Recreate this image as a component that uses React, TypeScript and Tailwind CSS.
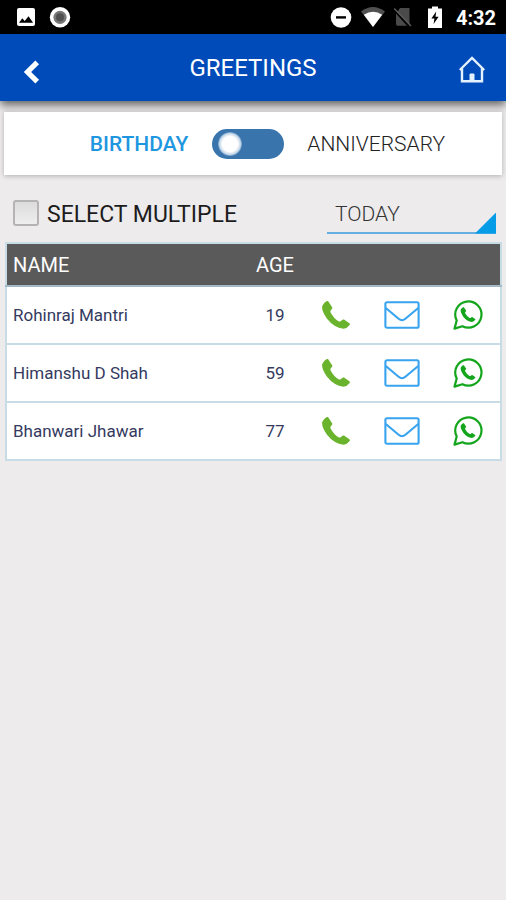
import { useState } from "react";

type Person = { name: string; age: number };

const people: Person[] = [
  { name: "Rohinraj Mantri", age: 19 },
  { name: "Himanshu D Shah", age: 59 },
  { name: "Bhanwari Jhawar", age: 77 },
];

const HANDSET =
  "M6.2.3 10.3 6.4Q10.6 7.6 9.4 8.6 7.9 10 8.6 11.6 12 18 17 20.5 18.5 20.9 19.8 19.2 20.8 18 22 18.6L27.4 22.2Q28.4 23 27.4 24.3 25 27.6 21.5 27.7 12 26.7 5 17.8-.6 10 .2 5 1 2.2 4.4.2 5.6-.3 6.2.3Z";

function StatusBar() {
  return (
    <div className="flex h-[34px] items-center bg-black pr-[10px] pl-4 text-white">
      <svg className="size-5" viewBox="0 0 20 20" aria-hidden="true">
        <rect x="1" y="1" width="18" height="18" rx="2" fill="white" />
        <path d="M3 15.8 6.3 11.3l2.4 2.8 3.8-4.8 4.6 6.5z" fill="black" />
      </svg>
      <svg className="ml-3 size-6" viewBox="0 0 24 24" aria-hidden="true">
        <circle cx="12" cy="12.3" r="10.2" fill="white" />
        <circle cx="12" cy="12.3" r="6.6" fill="#777" />
        <circle cx="12" cy="12.3" r="4" fill="#505050" />
      </svg>
      <svg className="ml-auto size-6" viewBox="0 0 24 24" aria-hidden="true">
        <circle cx="12" cy="12.5" r="10.3" fill="white" />
        <rect x="7" y="11.2" width="10" height="2.4" fill="black" />
      </svg>
      <svg className="ml-2 size-6" viewBox="0 0 24 24" aria-hidden="true">
        <path d="M0 6.5Q12-2.5 24 6.5L12 22z" fill="#505050" />
        <path d="M2.8 9.8Q12 3.8 21.2 9.8L12 22z" fill="white" />
      </svg>
      <svg className="ml-2 size-5" viewBox="0 0 20 20" aria-hidden="true">
        <path d="M7 1h9.5v16.5L4.2 5z" fill="#4a4a4a" />
        <path d="M3 6.5 14 18.8H4.5Q3 18.8 3 17z" fill="#4a4a4a" />
        <path d="M1.2 1.5 18 19" stroke="#5c5c5c" strokeWidth="1.4" />
      </svg>
      <svg className="ml-[14px] h-[22px] w-4" viewBox="0 0 16 22" aria-hidden="true">
        <path d="M5 0.5h6v2h4v19.5H1V2.5h4z" fill="white" />
        <path d="M9.2 5.5 4.4 12.5h3L6.6 18l5-7.2H8.5z" fill="black" />
      </svg>
      <time className="ml-[13px] pt-px text-[20px] leading-6 font-bold">4:32</time>
    </div>
  );
}

function PhoneIcon() {
  return (
    <svg className="h-7 w-7" viewBox="0 0 28 28" aria-hidden="true">
      <path d={HANDSET} fill="#6ab42d" />
    </svg>
  );
}

function MailIcon() {
  return (
    <svg className="h-7 w-9" viewBox="0 0 36 28" fill="none" stroke="#38a3ee" strokeWidth="2.1" aria-hidden="true">
      <rect x="1.4" y="1.2" width="33.2" height="25.6" rx="1.6" />
      <path d="M1.8 7 14.6 17.8Q18 20.7 21.4 17.8L34.2 7" />
    </svg>
  );
}

function WhatsAppIcon() {
  return (
    <svg className="size-[30px]" viewBox="0 0 30 30" aria-hidden="true">
      <path
        d="M1.5 28.6 3.7 20.5A13.1 13.1 0 1 1 9.4 26.2Z"
        fill="none"
        stroke="#13a51b"
        strokeWidth="2.2"
        strokeLinejoin="round"
      />
      <path d={HANDSET} fill="#13a51b" transform="translate(7.6 7.2) scale(.53)" />
    </svg>
  );
}

export default function App() {
  const [anniversary, setAnniversary] = useState(false);

  return (
    <div className="min-h-screen bg-[#edebec] font-['Roboto',sans-serif]">
      <StatusBar />
      <header className="grid h-[67px] grid-cols-[64px_1fr_64px] items-center bg-[#004bba] text-white shadow-[0_4px_9px_rgba(0,0,0,0.6)]">
        <button type="button" aria-label="Back" className="flex pt-2 pl-5">
          <svg className="size-6" viewBox="0 0 24 24" aria-hidden="true">
            <path d="M17.2 2.4 7.5 12l9.7 9.6" fill="none" stroke="white" strokeWidth="5.2" />
          </svg>
        </button>
        <h1 className="text-center text-[24px] leading-7 font-normal">GREETINGS</h1>
        <button type="button" aria-label="Home" className="flex justify-end pt-1 pr-5">
          <svg className="size-7" viewBox="0 0 28 28" fill="none" stroke="#e4f1ff" strokeWidth="2.4" aria-hidden="true">
            <path d="M1.8 14 14 2l12.2 12" />
            <path d="M4 12.3v12.9h20V12.3" />
            <path d="M12 25v-7h4v7z" fill="#e4f1ff" strokeWidth="1" />
          </svg>
        </button>
      </header>

      <main>
        <div className="relative mx-1 mt-[11px] flex h-[63px] items-center gap-6 bg-white text-[21px] leading-6 shadow-[0_1px_5px_rgba(0,0,0,0.25)]">
          <span className="w-[37%] text-right font-medium text-[#1e96e0]">BIRTHDAY</span>
          <label className="flex items-center gap-[23px] font-light text-[#222]">
            <span className="flex h-[30px] w-[72px] rounded-full bg-[#3a74ad] p-[2px] has-checked:justify-end">
              <input
                type="checkbox"
                role="switch"
                checked={anniversary}
                onChange={(e) => setAnniversary(e.target.checked)}
                className="m-px ml-1 size-6 appearance-none rounded-full bg-[radial-gradient(circle,white_45%,#c3d6e8_62%,#5a8cbc_72%)]"
              />
            </span>
            ANNIVERSARY
          </label>
        </div>

        <div className="flex h-[67px] items-center justify-between pr-[10px] pl-[13px]">
          <label className="flex items-center gap-2 pt-3 text-[23px] leading-7 text-[#1c1c1c]">
            <input
              type="checkbox"
              className="-mt-1 size-[26px] appearance-none rounded-[3px] border-2 border-[#b5b3b3] bg-linear-to-b from-[#dcdcdc] to-[#eeeeee] checked:bg-none checked:bg-[#38a3ee]"
            />
            SELECT MULTIPLE
          </label>
          <div className="relative mt-2 w-[35%] border-b-2 border-[#64aee2]">
            <select
              aria-label="Period"
              className="h-10 w-full appearance-none bg-transparent px-2 pt-1 text-[21px] leading-6 font-light text-[#333]"
            >
              <option>TODAY</option>
              <option>TOMORROW</option>
            </select>
            <span className="pointer-events-none absolute right-0 -bottom-[2px] size-[21px] bg-[#049ce6] [clip-path:polygon(100%_0,100%_100%,0_100%)]" />
          </div>
        </div>

        <div className="mr-1 ml-[5px] pb-6">
          <table className="w-full table-fixed border-collapse border-2 border-[#c8dce6] bg-white text-left">
            <thead>
              <tr className="h-[43px] border-b-2 border-[#a3bac6] bg-[#5a5a5a] text-[20px] leading-6 text-white">
                <th scope="col" className="pl-[6px] font-normal">NAME</th>
                <th scope="col" className="w-[56px] text-center font-normal">AGE</th>
                <th className="w-[66px]" />
                <th className="w-[66px]" />
                <th className="w-[66px]" />
              </tr>
            </thead>
            <tbody>
              {people.map((person) => (
                <tr key={person.name} className="h-[58px] border-b-2 border-[#c8dce6] text-[17px] leading-5 text-[#343a60]">
                  <td className="pl-[6px]">{person.name}</td>
                  <td className="text-center">{person.age}</td>
                  <td>
                    <button type="button" aria-label={`Call ${person.name}`} className="mx-auto flex">
                      <PhoneIcon />
                    </button>
                  </td>
                  <td>
                    <button type="button" aria-label={`Email ${person.name}`} className="mx-auto flex">
                      <MailIcon />
                    </button>
                  </td>
                  <td>
                    <button type="button" aria-label={`WhatsApp ${person.name}`} className="mx-auto flex">
                      <WhatsAppIcon />
                    </button>
                  </td>
                </tr>
              ))}
            </tbody>
          </table>
        </div>
      </main>
    </div>
  );
}
